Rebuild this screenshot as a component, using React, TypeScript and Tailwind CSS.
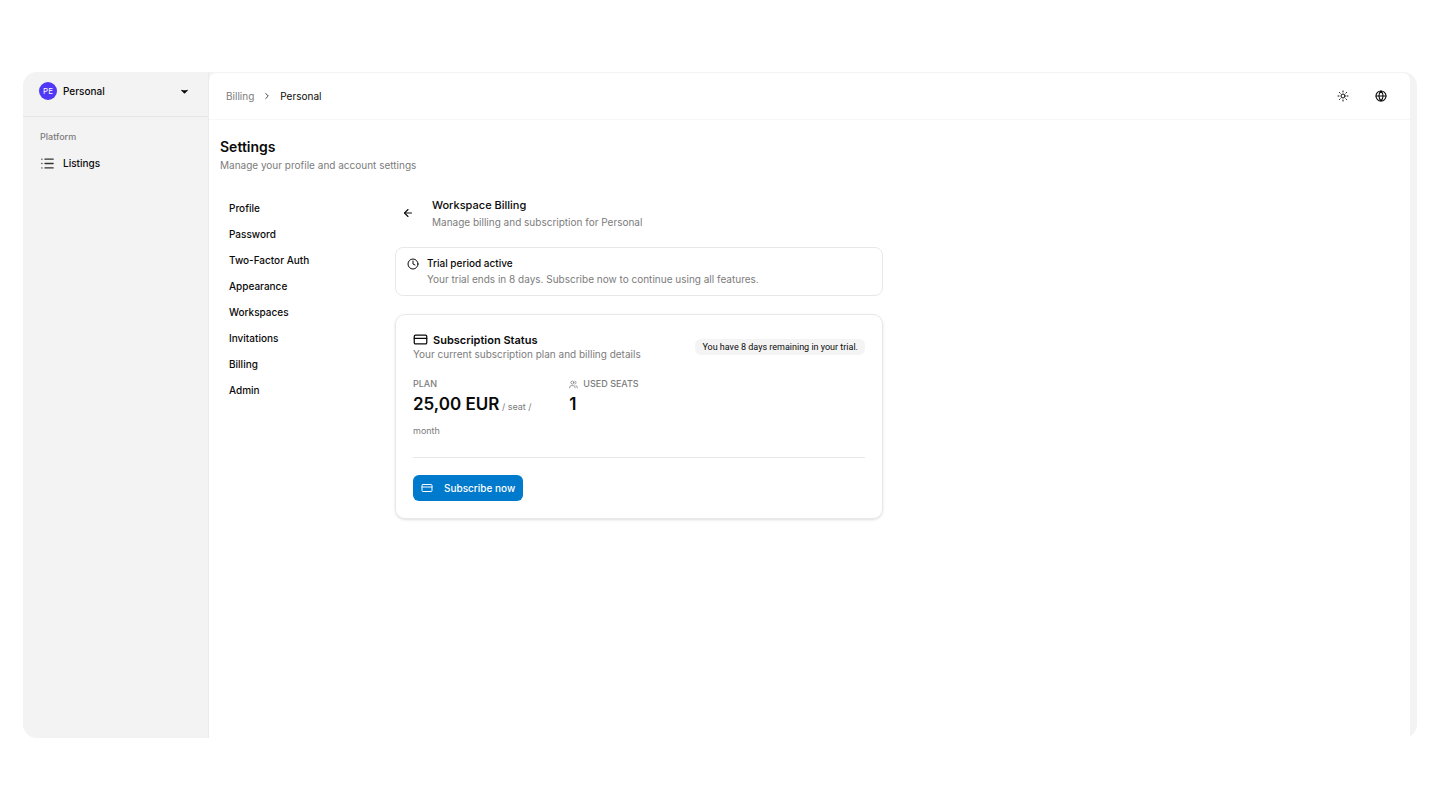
import React from 'react';
import { ArrowLeft, ChevronRight, Clock, CreditCard, Globe, List, Sun, Users } from 'lucide-react';

const settingsNav = [
  'Profile',
  'Password',
  'Two-Factor Auth',
  'Appearance',
  'Workspaces',
  'Invitations',
  'Billing',
  'Admin',
];

const Sidebar: React.FC = () => (
  <aside className="w-[186px] shrink-0 border-r border-[#ebebeb]">
    <button className="flex h-[45px] w-full items-center border-b border-[#e6e6e6] pb-1.5 pl-4 pr-5 text-left">
      <span className="flex size-[18px] items-center justify-center rounded-full bg-[#4f39f6] text-[8px] text-white">
        PE
      </span>
      <span className="ml-1.5 flex-1 text-[10px] font-medium">Personal</span>
      <svg viewBox="0 0 8 5" className="h-[5px] w-[7px]" fill="currentColor">
        <path d="M0.6 0.4C1.8 1 3 1.2 4 1.2S6.2 1 7.4 0.4L8 1.2 4.6 4.5Q4 5 3.4 4.5L0 1.2Z" />
      </svg>
    </button>

    <nav className="px-[17px] pt-3">
      <p className="text-[9px] leading-4 font-medium text-[#7c7c7c]">Platform</p>
      <a href="#" className="mt-2.5 flex items-center gap-2 text-[10px] leading-4 font-medium">
        <List className="size-[15px] text-[#333]" strokeWidth={2.2} />
        Listings
      </a>
    </nav>
  </aside>
);

const TopBar: React.FC = () => (
  <header className="flex h-[47px] items-center justify-between border-b border-[#f7f7f7] pl-[17px] pr-[23px] text-[10px]">
    <nav aria-label="Breadcrumb" className="flex items-center gap-2">
      <a href="#" className="text-[#7c7c7c]">Billing</a>
      <ChevronRight className="size-[10px] text-[#444]" strokeWidth={2.4} />
      <span>Personal</span>
    </nav>
    <div className="flex items-center gap-[26px]">
      <button aria-label="Toggle theme">
        <Sun className="size-3" strokeWidth={2} />
      </button>
      <button aria-label="Change language">
        <Globe className="size-3" strokeWidth={2.2} />
      </button>
    </div>
  </header>
);

const TrialAlert: React.FC = () => (
  <div role="alert" className="mt-[17px] flex gap-2 rounded-lg border border-[#e8e8e8] px-[11px] py-[7px] text-[10px] leading-4">
    <Clock className="mt-[3px] size-3" />
    <div className="pb-px">
      <p className="font-medium">Trial period active</p>
      <p className="text-[#7c7c7c]">
        Your trial ends in 8 days. Subscribe now to continue using all features.
      </p>
    </div>
  </div>
);

const SubscriptionCard: React.FC = () => (
  <section className="mt-[18px] rounded-[10px] border border-[#e8e8e8] px-[17px] pt-[17px] pb-[17px] shadow-sm">
    <div className="flex items-center justify-between">
      <div>
        <h3 className="flex items-center gap-[5px] text-[11px] leading-[14px] font-semibold">
          <CreditCard className="size-[15px]" />
          Subscription Status
        </h3>
        <p className="text-[10px] leading-[14px] text-[#7c7c7c]">
          Your current subscription plan and billing details
        </p>
      </div>
      <span className="rounded-md bg-[#f4f4f4] px-[7px] font-['Roboto',sans-serif] text-[9px] leading-4">
        You have 8 days remaining in your trial.
      </span>
    </div>

    <div className="mt-[17px] grid grid-cols-3 gap-[17px]">
      <div>
        <p className="text-[9px] leading-3 font-medium text-[#7c7c7c] uppercase">Plan</p>
        <p className="mt-0.5 text-[17px] leading-6 font-semibold">
          25,00 EUR
          <span className="text-[9px] leading-none font-normal text-[#7c7c7c]"> / seat / month</span>
        </p>
      </div>
      <div>
        <p className="flex items-center gap-[5px] text-[9px] leading-3 font-medium text-[#7c7c7c] uppercase">
          <Users className="size-[9px]" />
          Used seats
        </p>
        <p className="mt-0.5 text-[17px] leading-6 font-semibold">1</p>
      </div>
    </div>

    <div className="mt-[17px] border-t border-[#e8e8e8] pt-[17px]">
      <button className="flex h-[26px] items-center gap-[11px] rounded-md bg-[#007acc] px-2 text-[10px] font-medium text-white">
        <CreditCard className="size-3" />
        Subscribe now
      </button>
    </div>
  </section>
);

const App: React.FC = () => {
  return (
    <div className="min-h-screen bg-white px-[23px] py-[72px] font-['Inter',sans-serif] text-[#0a0a0a]">
      <div className="flex min-h-[calc(100vh-144px)] overflow-hidden rounded-[14px] bg-[#f3f3f3]">
        <Sidebar />
        <main className="mr-1.5 flex-1 rounded-t-lg border-t border-r border-[#f3f3f3] bg-white">
          <TopBar />
          <div className="px-[11px] pt-[18px]">
            <h1 className="text-[14px] leading-[18px] font-semibold">Settings</h1>
            <p className="text-[10px] leading-[18px] text-[#7c7c7c]">
              Manage your profile and account settings
            </p>

            <div className="mt-[21px] flex gap-[35px]">
              <nav aria-label="Settings" className="flex w-[140px] shrink-0 flex-col">
                {settingsNav.map((item) => (
                  <a key={item} href="#" className="px-[9px] text-[10px] leading-[26px] font-medium">
                    {item}
                  </a>
                ))}
              </nav>

              <div className="max-w-[488px] flex-1 pt-px">
                <div className="flex items-center">
                  <button aria-label="Back" className="flex size-[26px] items-center justify-center">
                    <ArrowLeft className="size-3" strokeWidth={2.2} />
                  </button>
                  <div className="ml-[11px]">
                    <h2 className="text-[11px] leading-[18px] font-medium">Workspace Billing</h2>
                    <p className="text-[10px] leading-4 text-[#7c7c7c]">
                      Manage billing and subscription for Personal
                    </p>
                  </div>
                </div>
                <TrialAlert />
                <SubscriptionCard />
              </div>
            </div>
          </div>
        </main>
      </div>
    </div>
  );
};

export default App;
